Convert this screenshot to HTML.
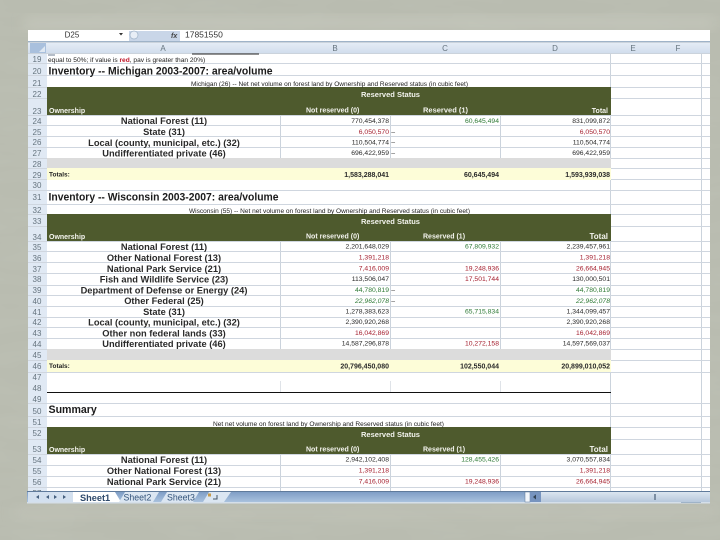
<!DOCTYPE html>
<html><head><meta charset="utf-8"><style>
html,body{margin:0;padding:0;width:720px;height:540px;overflow:hidden;background:#b9bcb0}
svg{display:block;font-family:"Liberation Sans",sans-serif}
.t{filter:url(#b)}
.lb{font-size:9.3px;font-weight:bold;text-anchor:middle;fill:#2a2a2a}
.ti{font-size:10.6px;font-weight:bold;fill:#1a1a1a}
.n{font-size:6.8px;text-anchor:end;fill:#2a2a2a}
.r{fill:#a5202f}.g{fill:#2f7a36}
.h{font-size:7px;font-weight:bold;fill:#f4f4ee}
.rh{font-size:8px;text-anchor:middle;fill:#66747f}
.ch{font-size:8px;text-anchor:middle;fill:#66747f}
.tot{font-size:7px;font-weight:bold;text-anchor:end;fill:#2a2a2a}
</style></head><body>
<svg width="720" height="540" viewBox="0 0 720 540" xmlns="http://www.w3.org/2000/svg">
<defs>
<filter id="b" x="-5%" y="-20%" width="110%" height="140%"><feGaussianBlur stdDeviation="0.38"/></filter>
<filter id="soft" x="-20%" y="-20%" width="140%" height="140%"><feGaussianBlur stdDeviation="6"/></filter>
<filter id="tex"><feTurbulence type="fractalNoise" baseFrequency="0.012 0.06" numOctaves="3" seed="4"/><feColorMatrix values="0 0 0 0 0.55 0 0 0 0 0.57 0 0 0 0 0.50 0 0 0 0.5 -0.17"/></filter>
<linearGradient id="ch" x1="0" y1="0" x2="0" y2="1"><stop offset="0" stop-color="#e6edf6"/><stop offset="1" stop-color="#cfdcec"/></linearGradient>
<linearGradient id="bar" x1="0" y1="0" x2="0" y2="1"><stop offset="0" stop-color="#7f9ec6"/><stop offset="1" stop-color="#a9c2de"/></linearGradient>
<linearGradient id="sb" x1="0" y1="0" x2="0" y2="1"><stop offset="0" stop-color="#dbe5f0"/><stop offset="1" stop-color="#b7c8dc"/></linearGradient>
</defs>
<rect width="720" height="540" fill="#b9bcb0"/>
<rect width="720" height="540" filter="url(#tex)"/>
<rect x="24" y="16" width="690" height="14" fill="#c6c8bd" filter="url(#soft)" opacity=".7"/>
<rect x="14" y="505" width="700" height="14" fill="#c2c4b9" filter="url(#soft)" opacity=".5"/>

<!-- sheet -->
<rect x="28" y="30" width="682" height="473" fill="#fff"/>
<!-- formula bar -->
<rect x="28" y="41" width="682" height="1" fill="#9fb3c8"/>
<rect x="129" y="31" width="51" height="10" fill="#c9d6e8"/>
<circle cx="134" cy="35" r="4" fill="#e8eef6" stroke="#9fb3c8" stroke-width=".7"/>
<path d="M119 33l4 0-2 2.500z" fill="#333"/>
<g class="t">
<text x="72" y="37.500" font-size="8" fill="#333" text-anchor="middle">D25</text>
<text x="171" y="38" font-size="7" font-style="italic" font-weight="bold" fill="#444">fx</text>
<text x="185" y="37.500" font-size="8.500" fill="#333">17851550</text>
</g>
<!-- col header -->
<rect x="28" y="42" width="682" height="12" fill="url(#ch)"/>
<rect x="30" y="43" width="16" height="10" fill="#a9c0dd"/>
<path d="M45 46v6h-6z" fill="#dfe8f2"/>
<!-- row header -->
<rect x="28" y="54" width="19" height="438" fill="#e0e9f4"/>
<!-- grid -->
<g fill="#cbd3dc">
<rect x="280" y="54" width="1" height="438"/>
<rect x="390" y="54" width="1" height="438"/>
<rect x="500" y="54" width="1" height="438"/>
<rect x="610" y="54" width="1" height="438"/>
<rect x="701" y="54" width="1" height="438"/>
<rect x="28" y="42" width="682" height="1"/>
<rect x="28" y="53" width="682" height="1"/>
</g>
<g fill="#cfd6df" id="h">
<rect x="28" y="63" width="682" height="1"/><rect x="28" y="75" width="682" height="1"/><rect x="28" y="87" width="682" height="1"/><rect x="28" y="98" width="682" height="1"/><rect x="28" y="115" width="682" height="1"/><rect x="28" y="125" width="682" height="1"/><rect x="28" y="136" width="682" height="1"/><rect x="28" y="147" width="682" height="1"/><rect x="28" y="158" width="682" height="1"/><rect x="28" y="168" width="682" height="1"/><rect x="28" y="179" width="682" height="1"/><rect x="28" y="190" width="682" height="1"/><rect x="28" y="204" width="682" height="1"/><rect x="28" y="214" width="682" height="1"/><rect x="28" y="226" width="682" height="1"/><rect x="28" y="241" width="682" height="1"/><rect x="28" y="251" width="682" height="1"/><rect x="28" y="262" width="682" height="1"/><rect x="28" y="273" width="682" height="1"/><rect x="28" y="285" width="682" height="1"/><rect x="28" y="295" width="682" height="1"/><rect x="28" y="306" width="682" height="1"/><rect x="28" y="317" width="682" height="1"/><rect x="28" y="327" width="682" height="1"/><rect x="28" y="338" width="682" height="1"/><rect x="28" y="349" width="682" height="1"/><rect x="28" y="360" width="682" height="1"/><rect x="28" y="372" width="682" height="1"/><rect x="28" y="403" width="682" height="1"/><rect x="28" y="416" width="682" height="1"/><rect x="28" y="427" width="682" height="1"/><rect x="28" y="439" width="682" height="1"/><rect x="28" y="454" width="682" height="1"/><rect x="28" y="465" width="682" height="1"/><rect x="28" y="476" width="682" height="1"/><rect x="28" y="487" width="682" height="1"/>
</g>
<!-- white-out of merged areas -->
<rect x="47" y="54" width="563" height="9" fill="#fff"/>
<rect x="47" y="64" width="563" height="11" fill="#fff"/>
<rect x="47" y="76" width="563" height="11" fill="#fff"/>
<rect x="47" y="180" width="563" height="10" fill="#fff"/>
<rect x="47" y="191" width="563" height="13" fill="#fff"/>
<rect x="47" y="205" width="563" height="9" fill="#fff"/>
<rect x="47" y="373" width="563" height="19" fill="#fff"/>
<rect x="280" y="381" width="1" height="11" fill="#dfe3e8"/><rect x="390" y="381" width="1" height="11" fill="#dfe3e8"/><rect x="500" y="381" width="1" height="11" fill="#dfe3e8"/>
<rect x="47" y="393" width="563" height="10" fill="#fff"/>
<rect x="47" y="404" width="563" height="12" fill="#fff"/>
<rect x="47" y="417" width="563" height="10" fill="#fff"/>
<!-- dark bands -->
<g fill="#4e5a2d">
<rect x="47" y="87" width="564" height="28"/>
<rect x="47" y="214" width="564" height="27"/>
<rect x="47" y="427" width="564" height="27"/>
</g>
<!-- grey + cream -->
<rect x="47" y="158" width="564" height="10" fill="#dcdcdc"/>
<rect x="47" y="168" width="564" height="12" fill="#fdfdd8"/>
<rect x="47" y="349" width="564" height="11" fill="#dcdcdc"/>
<rect x="47" y="360" width="564" height="12" fill="#fdfdd8"/>
<rect x="47" y="392" width="564" height="1" fill="#111"/>
<!-- clipped row 18 remnants -->
<rect x="192" y="53.500" width="67" height="1" fill="#222"/>
<rect x="48" y="54" width="7" height="2" fill="#b5bdc8"/>

<g class="t">
<!-- column letters -->
<text class="ch" x="163" y="51">A</text><text class="ch" x="335" y="51">B</text><text class="ch" x="445" y="51">C</text><text class="ch" x="555" y="51">D</text><text class="ch" x="633" y="51">E</text><text class="ch" x="678" y="51">F</text>
<!-- row numbers -->
<text class="rh" x="37" y="62">19</text><text class="rh" x="37" y="74">20</text><text class="rh" x="37" y="86">21</text><text class="rh" x="37" y="97">22</text><text class="rh" x="37" y="114">23</text><text class="rh" x="37" y="124">24</text><text class="rh" x="37" y="135">25</text><text class="rh" x="37" y="145">26</text><text class="rh" x="37" y="156">27</text><text class="rh" x="37" y="167">28</text><text class="rh" x="37" y="178">29</text><text class="rh" x="37" y="188">30</text><text class="rh" x="37" y="200">31</text><text class="rh" x="37" y="213">32</text><text class="rh" x="37" y="224">33</text><text class="rh" x="37" y="240">34</text><text class="rh" x="37" y="250">35</text><text class="rh" x="37" y="261">36</text><text class="rh" x="37" y="272">37</text><text class="rh" x="37" y="282">38</text><text class="rh" x="37" y="293">39</text><text class="rh" x="37" y="304">40</text><text class="rh" x="37" y="315">41</text><text class="rh" x="37" y="325">42</text><text class="rh" x="37" y="336">43</text><text class="rh" x="37" y="347">44</text><text class="rh" x="37" y="358">45</text><text class="rh" x="37" y="369">46</text><text class="rh" x="37" y="380">47</text><text class="rh" x="37" y="391">48</text><text class="rh" x="37" y="402">49</text><text class="rh" x="37" y="414">50</text><text class="rh" x="37" y="425">51</text><text class="rh" x="37" y="436">52</text><text class="rh" x="37" y="452">53</text><text class="rh" x="37" y="463">54</text><text class="rh" x="37" y="474">55</text><text class="rh" x="37" y="485">56</text><text class="rh" x="37" y="496">57</text>

<!-- top text -->
<text x="48" y="62" font-size="6.600" fill="#222">equal to 50%; if value is <tspan fill="#c0182a" font-weight="bold">red</tspan>, pav is greater than 20%)</text>
<text class="ti" x="48.500" y="74.500" textLength="224" lengthAdjust="spacingAndGlyphs">Inventory -- Michigan 2003-2007: area/volume</text>
<text x="191" y="86" font-size="6.500" fill="#222" textLength="277" lengthAdjust="spacingAndGlyphs">Michigan (26) -- Net net volume on forest land by Ownership and Reserved status (in cubic feet)</text>
<text class="h" x="361" y="97" textLength="59" lengthAdjust="spacingAndGlyphs">Reserved Status</text>
<text class="h" x="49" y="113">Ownership</text>
<text class="h" x="306" y="112.500" font-size="7.500">Not reserved (0)</text>
<text class="h" x="423" y="112.500" style="font-size:7.500px">Reserved (1)</text>
<text class="h" x="608" y="113" text-anchor="end">Total</text>

<text class="lb" x="164" y="124">National Forest (11)</text>
<text class="lb" x="164" y="135">State (31)</text>
<text class="lb" x="164" y="146">Local (county, municipal, etc.) (32)</text>
<text class="lb" x="164" y="156.500">Undifferentiated private (46)</text>
<text x="49" y="176.500" font-size="6.500" font-weight="bold" fill="#222">Totals:</text>

<text class="n" x="389" y="123">770,454,378</text><text class="n g" x="499" y="123">60,645,494</text><text class="n" x="610" y="123">831,099,872</text>
<text class="n r" x="389" y="134">6,050,570</text><text class="n" x="395" y="134">–</text><text class="n r" x="610" y="134">6,050,570</text>
<text class="n" x="389" y="144.500">110,504,774</text><text class="n" x="395" y="144.500">–</text><text class="n" x="610" y="144.500">110,504,774</text>
<text class="n" x="389" y="155">696,422,959</text><text class="n" x="395" y="155">–</text><text class="n" x="610" y="155">696,422,959</text>
<text class="tot" x="389" y="177">1,583,288,041</text><text class="tot g" x="499" y="177">60,645,494</text><text class="tot" x="610" y="177">1,593,939,038</text>

<!-- Wisconsin -->
<text class="ti" x="48.500" y="200.500" textLength="230" lengthAdjust="spacingAndGlyphs">Inventory -- Wisconsin 2003-2007: area/volume</text>
<text x="189" y="213" font-size="6.500" fill="#222" textLength="281" lengthAdjust="spacingAndGlyphs">Wisconsin (55) -- Net net volume on forest land by Ownership and Reserved status (in cubic feet)</text>
<text class="h" x="361" y="224" textLength="59" lengthAdjust="spacingAndGlyphs">Reserved Status</text>
<text class="h" x="49" y="239">Ownership</text>
<text class="h" x="306" y="238.500">Not reserved (0)</text>
<text class="h" x="423" y="238.500">Reserved (1)</text>
<text class="h" x="608" y="239" text-anchor="end" style="font-size:8px">Total</text>

<text class="lb" x="164" y="250">National Forest (11)</text>
<text class="lb" x="164" y="261">Other National Forest (13)</text>
<text class="lb" x="164" y="272">National Park Service (21)</text>
<text class="lb" x="164" y="282.500">Fish and Wildlife Service (23)</text>
<text class="lb" x="164" y="293.500">Department of Defense or Energy (24)</text>
<text class="lb" x="164" y="304">Other Federal (25)</text>
<text class="lb" x="164" y="315">State (31)</text>
<text class="lb" x="164" y="325.500">Local (county, municipal, etc.) (32)</text>
<text class="lb" x="164" y="336.500">Other non federal lands (33)</text>
<text class="lb" x="164" y="347">Undifferentiated private (46)</text>
<text x="49" y="368" font-size="6.500" font-weight="bold" fill="#222">Totals:</text>

<text class="n" x="389" y="248.500">2,201,648,029</text><text class="n g" x="499" y="248.500">67,809,932</text><text class="n" x="610" y="248.500">2,239,457,961</text>
<text class="n r" x="389" y="259.500">1,391,218</text><text class="n r" x="610" y="259.500">1,391,218</text>
<text class="n r" x="389" y="270.500">7,416,009</text><text class="n r" x="499" y="270.500">19,248,936</text><text class="n r" x="610" y="270.500">26,664,945</text>
<text class="n" x="389" y="281">113,506,047</text><text class="n r" x="499" y="281">17,501,744</text><text class="n" x="610" y="281">130,000,501</text>
<text class="n g" x="389" y="292">44,780,819</text><text class="n" x="395" y="292">–</text><text class="n g" x="610" y="292">44,780,819</text>
<text class="n g" x="389" y="303" font-style="italic">22,962,078</text><text class="n" x="395" y="303">–</text><text class="n g" x="610" y="303" font-style="italic">22,962,078</text>
<text class="n" x="389" y="313.500">1,278,383,623</text><text class="n g" x="499" y="313.500">65,715,834</text><text class="n" x="610" y="313.500">1,344,099,457</text>
<text class="n" x="389" y="324">2,390,920,268</text><text class="n" x="610" y="324">2,390,920,268</text>
<text class="n r" x="389" y="335">16,042,869</text><text class="n r" x="610" y="335">16,042,869</text>
<text class="n" x="389" y="345.500">14,587,296,878</text><text class="n r" x="499" y="345.500">10,272,158</text><text class="n" x="610" y="345.500">14,597,569,037</text>
<text class="tot" x="389" y="368.500">20,796,450,080</text><text class="tot" x="499" y="368.500">102,550,044</text><text class="tot" x="610" y="368.500">20,899,010,052</text>

<!-- Summary -->
<text class="ti" x="48.500" y="413">Summary</text>
<text x="213" y="426" font-size="6.500" fill="#222" textLength="231" lengthAdjust="spacingAndGlyphs">Net net volume on forest land by Ownership and Reserved status (in cubic feet)</text>
<text class="h" x="361" y="437" textLength="59" lengthAdjust="spacingAndGlyphs">Reserved Status</text>
<text class="h" x="49" y="452">Ownership</text>
<text class="h" x="306" y="451.500">Not reserved (0)</text>
<text class="h" x="423" y="451.500">Reserved (1)</text>
<text class="h" x="608" y="452" text-anchor="end" style="font-size:8px">Total</text>
<text class="lb" x="164" y="463">National Forest (11)</text>
<text class="lb" x="164" y="474">Other National Forest (13)</text>
<text class="lb" x="164" y="485">National Park Service (21)</text>
<text class="n" x="389" y="461.500">2,942,102,408</text><text class="n g" x="499" y="461.500">128,455,426</text><text class="n" x="610" y="461.500">3,070,557,834</text>
<text class="n r" x="389" y="472.500">1,391,218</text><text class="n r" x="610" y="472.500">1,391,218</text>
<text class="n r" x="389" y="483.500">7,416,009</text><text class="n r" x="499" y="483.500">19,248,936</text><text class="n r" x="610" y="483.500">26,664,945</text>
</g>

<!-- tab bar -->
<rect x="27" y="491" width="683" height="1" fill="#5f7a9b"/>
<rect x="27" y="492" width="683" height="10" fill="url(#bar)"/>
<rect x="27" y="502" width="683" height="1.500" fill="#d5dfe9"/>
<rect x="28" y="492" width="45" height="10" fill="#d3e0ef"/>
<path d="M36 497l3-2v4zM46 497l3-2v4zM54 495l3 2-3 2zM63 495l3 2-3 2z" fill="#46607f"/>
<path d="M73 492h42l6 10h-48z" fill="#fff"/>
<path d="M119 502l6-10h34l-6 10z" fill="#dbe6f2"/>
<path d="M161 502l6-10h32l-6 10z" fill="#dbe6f2"/>
<path d="M203 502l6-10h22l-7 10z" fill="#dbe6f2"/>
<g class="t">
<text x="80" y="501" font-size="9.200" font-weight="bold" fill="#2e4a6c">Sheet1</text>
<text x="123.500" y="500.500" font-size="8.800" fill="#35557c">Sheet2</text>
<text x="167" y="500.500" font-size="8.800" fill="#35557c">Sheet3</text>
</g>
<rect x="208" y="493.500" width="3" height="3" fill="#c69a4a"/><path d="M213 499h4v-4" fill="none" stroke="#456" stroke-width="1"/>
<!-- right scrollbar -->
<rect x="525" y="492" width="5" height="10" fill="#f2f6fb" stroke="#5c7694" stroke-width=".5"/>
<rect x="530" y="492" width="11" height="10" fill="#7794bf"/>
<path d="M533 497l3-2.500v5z" fill="#345"/>
<rect x="541" y="492" width="169" height="10" fill="url(#sb)"/>
<rect x="654" y="494" width="2" height="6" fill="#7c8ea3"/>
<rect x="681" y="502" width="20" height="1" fill="#9fb3c8"/>
</svg>
</body></html>
